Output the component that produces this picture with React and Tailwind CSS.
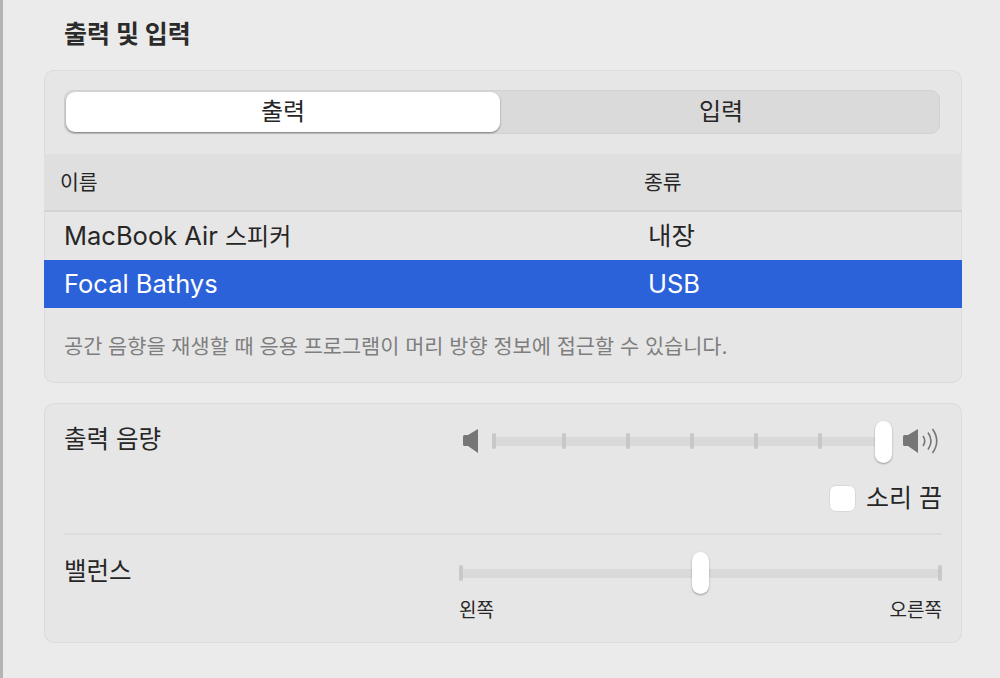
const FONT = "font-['Inter','Noto_Sans_CJK_KR',sans-serif]";

function Thumb() {
  return <div className="w-[17px] h-[42px] rounded-full bg-white shadow-[0_1px_2px_rgba(0,0,0,0.35)]" />;
}

function Tick() {
  return <div className="w-1 h-4 rounded-sm bg-[#c8c8c8] shrink-0" />;
}

function SpeakerBody() {
  return <path d="M0 7.5 L0 15.5 Q0 17 1.5 17 L5 17 L15 24 L15 0 L5 6 L1.5 6 Q0 6 0 7.5 Z" fill="#767676" />;
}

function SpeakerLow() {
  return (
    <svg width="17" height="24" viewBox="0 0 17 24" className="block">
      <SpeakerBody />
    </svg>
  );
}

function SpeakerHigh() {
  return (
    <svg width="35" height="26" viewBox="0 0 35 26" className="block">
      <g transform="translate(0 1)">
        <SpeakerBody />
      </g>
      <path d="M20 8 Q23.5 13 20 18" fill="none" stroke="#767676" strokeWidth="1.6" />
      <path d="M25 4.5 Q31 13 25 21.5" fill="none" stroke="#767676" strokeWidth="1.6" />
      <path d="M29.5 1 Q38 13 29.5 25" fill="none" stroke="#767676" strokeWidth="1.6" />
    </svg>
  );
}

export default function App() {
  return (
    <div className={`${FONT} w-[1000px] h-[678px] overflow-hidden bg-[#ebebeb] border-l-[3px] border-[#b4b4b4] text-[#262626] flex flex-col pl-[41px] pr-[38px]`}>
      <h1 className="h-[70px] shrink-0 pl-5 pt-[17px] text-[25px] leading-[35px] font-bold text-[#2b2b2b]">출력 및 입력</h1>

      <section className="h-[313px] shrink-0 rounded-[10px] bg-[#e6e6e6] shadow-[inset_0_0_0_1px_#dcdcdc] flex flex-col overflow-hidden">
        <div className="h-[84px] shrink-0 pt-[20px] px-[20px]">
          <div className="h-[44px] w-[876px] rounded-[9px] bg-[#dadada] border border-[#d2d2d2] flex">
            <div className="w-[434px] my-px ml-px rounded-[9px] bg-white shadow-[0_1px_2px_rgba(0,0,0,0.45)] flex items-center justify-center text-[24px]">출력</div>
            <div className="flex-1 flex items-center justify-center pl-[3px] text-[24px]">입력</div>
          </div>
        </div>

        <div className="h-[58px] shrink-0 bg-[#dfdfdf] border-b-2 border-[#d3d3d3] flex items-center text-[20.5px] pl-[16px] pt-[3px]">
          <div className="w-[584px]">이름</div>
          <div>종류</div>
        </div>

        <div className="h-[48px] shrink-0 flex items-center text-[25.5px] pl-[20px] pt-[1px]">
          <div className="w-[584px]">MacBook Air <span className="text-[24px]">스피커</span></div>
          <div>내장</div>
        </div>
        <div className="h-[48px] shrink-0 flex items-center text-[25.5px] pl-[20px] pt-[1px] bg-[#2b62d9] text-white">
          <div className="w-[584px]">Focal Bathys</div>
          <div>USB</div>
        </div>

        <div className="flex-1 flex items-center pl-[20px] pt-[2px] text-[20.8px] text-[#7e7e7e]">
          공간 음향을 재생할 때 응용 프로그램이 머리 방향 정보에 접근할 수 있습니다.
        </div>
      </section>

      <section className="mt-[20px] h-[240px] shrink-0 rounded-[10px] bg-[#e6e6e6] shadow-[inset_0_0_0_1px_#dcdcdc] px-[20px] flex flex-col">
        <div className="h-[132px] shrink-0 border-b-2 border-[#dcdcdc] flex flex-col">
          <div className="flex justify-between pt-[17px]">
            <div className="text-[24.5px] leading-[36px] pt-px">출력 음량</div>
            <div className="flex items-center h-[42px] mr-[4px]">
              <SpeakerLow />
              <div className="relative w-[392px] h-[9px] ml-[12px] mr-[19px] bg-[#d9d9d9]">
                <div className="absolute left-0 -top-[3.5px] flex gap-[60px]">
                  <div className="mr-[6px]"><Tick /></div>
                  <Tick /><Tick /><Tick /><Tick /><Tick />
                </div>
                <div className="absolute -right-2 -top-[16px]"><Thumb /></div>
              </div>
              <SpeakerHigh />
            </div>
          </div>
          <div className="flex justify-end items-center gap-[10px] mt-[21px]">
            <div className="w-[27px] h-[27px] rounded-[7px] bg-white border border-[#d8d8d8]" />
            <div className="text-[25px] leading-[30px]">소리 끔</div>
          </div>
        </div>

        <div className="flex justify-between pt-[17px]">
          <div className="text-[24.5px] leading-[36px] pt-px">밸런스</div>
          <div className="w-[483px] flex flex-col">
            <div className="relative h-[42px] flex items-center">
              <div className="w-full h-[9px] bg-[#d9d9d9]" />
              <div className="absolute inset-x-0 top-[13px] flex justify-between"><Tick /><Tick /></div>
              <div className="absolute left-[233px] top-0"><Thumb /></div>
            </div>
            <div className="flex justify-between text-[19px] leading-[24px] mt-[5px]">
              <span>왼쪽</span>
              <span>오른쪽</span>
            </div>
          </div>
        </div>
      </section>
    </div>
  );
}
